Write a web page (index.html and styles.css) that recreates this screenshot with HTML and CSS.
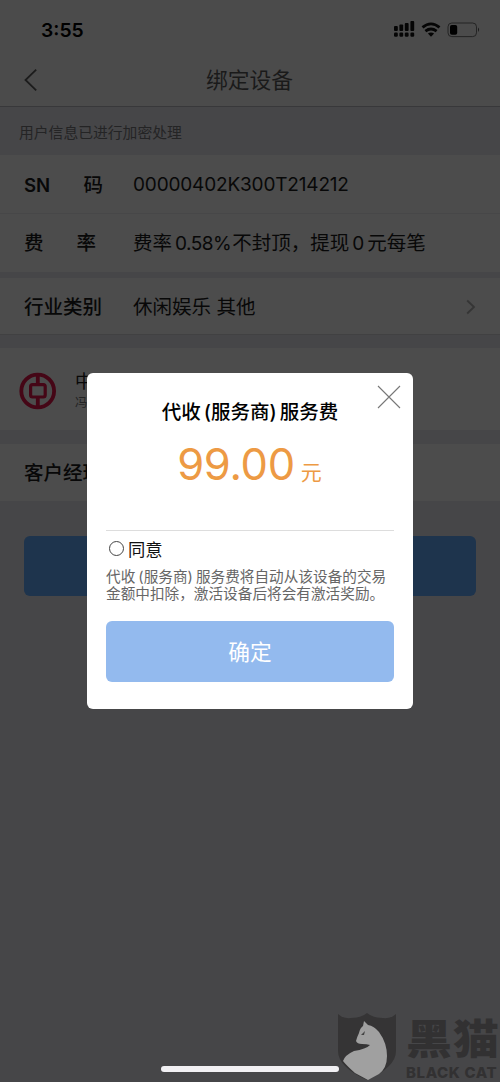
FILE: index.html
```html
<!DOCTYPE html>
<html lang="zh-CN">
<head>
<meta charset="utf-8">
<title>绑定设备</title>
<link rel="stylesheet" href="styles.css">
</head>
<body>
<div class="screen">
  <header class="top">
    <div class="status">
      <span class="time">3:55</span>
      <svg class="status-icons" width="88" height="20" viewBox="0 0 88 20">
        <g fill="#050505">
          <rect x="1" y="6" width="3.8" height="5" rx="1"/><rect x="6.4" y="4.6" width="3.8" height="6.4" rx="1"/><rect x="11.8" y="3" width="3.8" height="8" rx="1"/><rect x="17.4" y="1" width="3.8" height="10" rx="1"/>
          <rect x="1" y="12.6" width="3.8" height="4.2" rx="1.2"/><rect x="6.4" y="12.6" width="3.8" height="4.2" rx="1.2"/><rect x="11.8" y="12.6" width="3.8" height="4.2" rx="1.2"/><rect x="17.4" y="12.6" width="3.8" height="4.2" rx="1.2"/>
          <path d="M38 16.7L34.9 13.6Q38 11.2 41.1 13.6Z"/>
        </g>
        <g fill="none" stroke="#050505" stroke-width="2.8">
          <path d="M29.5 7.4Q38 .4 46.5 7.4"/><path d="M32.4 11.1Q38 6.8 43.6 11.1"/>
        </g>
        <rect x="55" y="3" width="28.5" height="13.6" rx="3.8" fill="none" stroke="#242424" stroke-width="1"/>
        <rect x="57" y="5" width="7.2" height="9.8" rx="1.8" fill="#000"/>
        <path d="M85 7.6Q87.2 9.8 85 12Z" fill="#1c1c1c"/>
      </svg>
    </div>
    <div class="nav">
      <svg class="back" width="14" height="24" viewBox="0 0 14 24"><path d="M13.2 1.7L2.5 12L13.2 22.3" fill="none" stroke="#1c1c1c" stroke-width="1.8"/></svg>
      <h1 class="nav-title">绑定设备</h1>
    </div>
  </header>
  <p class="notice">用户信息已进行加密处理</p>
  <section class="group">
    <div class="row row-sn"><span class="label"><span class="latin">SN</span><span>码</span></span><span class="value serial">00000402K300T214212</span></div>
    <div class="row row-rate"><span class="label label-rate"><span>费</span><span>率</span></span><span class="value rate">费率<span class="num">0.58%</span>不封顶，提现<span class="zero">0</span>元每笔</span></div>
  </section>
  <section class="group industry">
    <div class="row"><span class="label">行业类别</span><span class="value">休闲娱乐 其他</span>
      <svg class="arrow" width="10" height="16" viewBox="0 0 10 16"><path d="M1.2 1.5L8 8L1.2 14.5" fill="none" stroke="#353535" stroke-width="1.8"/></svg>
    </div>
  </section>
  <section class="bank">
    <svg width="38" height="38" viewBox="0 0 38 38"><g fill="none" stroke="#450616"><circle cx="18.7" cy="19" r="16.4" stroke-width="3.8"/><rect x="11.6" y="12.6" width="14.6" height="12.4" rx="2" stroke-width="3.2"/><path d="M18.8 2V12.6M18.8 25V36" stroke-width="3.8"/></g></svg>
    <div class="bank-text"><span class="bank-name">中</span><span class="holder">冯</span></div>
  </section>
  <section class="manager">客户经理</section>
  <div class="submit"></div>
</div>

<div class="modal">
  <svg class="close" width="24" height="24" viewBox="0 0 24 24"><path d="M1 1L23 23M23 1L1 23" stroke="#777" stroke-width="1.1"/></svg>
  <h2 class="modal-title">代收<span class="paren-open">(</span>服务商<span class="paren-close">)</span>服务费</h2>
  <div class="price"><span class="amount">99.00</span><span class="unit">元</span></div>
  <div class="agree"><span class="radio"></span>同意</div>
  <p class="terms">代收<span class="paren-open">(</span>服务商<span class="paren-close">)</span>服务费将自动从该设备的交易<br>金额中扣除，激活设备后将会有激活奖励。</p>
  <div class="confirm">确定</div>
</div>

<div class="home-bar"></div>
<div class="watermark">
  <svg width="60" height="68" viewBox="0 0 60 68">
    <path d="M1 1Q6 6 14 5Q24 5 30 0Q36 5 46 5Q54 6 59 1V38Q59 54 30 67Q1 54 1 38Z" fill="#353435"/>
    <path d="M27 8L31 12Q37 13 42 19Q50 30 50 43Q50 55 42 61L31 67L18 60Q10 53 6 48Q8 42 17 38Q29 36 33 32Q30 31 25 31Q20 31 19 28Q20 24 22 20Q23 15 26 13Z" fill="#a0a0a0"/>
    <path d="M24 22L28 18L27 22Z" fill="#444"/>
  </svg>
  <div class="brand"><span class="brand-cn">黑猫</span><span class="brand-en">BLACK CAT</span></div>
</div>
</body>
</html>
```
FILE: styles.css
```css
* { box-sizing: border-box; }
body {
  margin: 0;
  width: 500px;
  height: 1082px;
  position: relative;
  overflow: hidden;
  background: #464648;
  color: #080808;
  font-family: Inter, "Noto Sans CJK SC", sans-serif;
}
h1, h2, p { margin: 0; font-weight: 400; }
svg { display: block; flex: none; }

.top { height: 107px; background: #4b4b4b; border-bottom: 1px solid #38383a; }
.status { height: 54px; padding: 20px 15px 0 41px; display: flex; justify-content: space-between; }
.time { font-size: 19.3px; line-height: 21px; font-weight: 600; color: #000; }
.status-icons { margin-right: 4px; }
.nav { height: 52px; display: flex; align-items: center; padding-left: 23px; }
.nav-title { flex: 1; margin-right: 38px; text-align: center; font-size: 21.8px; line-height: 32px; color: #1a1a1a; }
.notice { height: 48px; padding-left: 19px; font-size: 14.8px; line-height: 52px; color: #242425; }

.row { display: flex; align-items: center; padding: 2px 24px 0; background: #4c4c4c; font-size: 19.5px; line-height: 28px; }
.row-sn { height: 59px; border-bottom: 1px solid #474748; }
.row-rate { height: 58px; padding-top: 0; }
.label { width: 79px; margin-right: 30px; display: flex; justify-content: space-between; align-items: baseline; font-weight: 500; white-space: nowrap; }
.latin { font-size: 18.6px; font-weight: 600; }
.label-rate { padding-right: 7px; }
.value { white-space: nowrap; }
.serial { font-size: 19px; letter-spacing: -.17px; }
.rate { font-size: 19.5px; }
.num { margin: 0 1px 0 3px; font-size: 19px; letter-spacing: -.5px; }
.zero { margin: 0 3px; font-size: 19px; }
.industry { margin-top: 6px; }
.industry .row { height: 57px; border-bottom: 1px solid #414142; }
.arrow { margin-left: auto; }

.bank { height: 82px; margin-top: 13px; padding: 4px 0 0 19px; display: flex; align-items: center; gap: 18px; background: #4c4c4c; }
.bank-text { display: flex; flex-direction: column; padding-top: 1px; }
.bank-name { font-size: 18px; line-height: 22px; }
.holder { font-size: 12.5px; line-height: 19px; color: #242424; }
.manager { height: 57px; margin-top: 14px; padding-left: 24px; background: #4c4c4c; font-size: 19.5px; line-height: 59px; font-weight: 500; }
.submit { height: 60px; margin: 35px 24px 0; border-radius: 6px; background: #1e344d; }

.modal {
  position: absolute;
  left: 87px;
  top: 373px;
  width: 326px;
  height: 336px;
  padding: 24px 19px 27px;
  border-radius: 6px;
  background: #fff;
}
.close { position: absolute; right: 12px; top: 12px; }
.modal-title { text-align: center; font-size: 19.5px; line-height: 31px; font-weight: 500; color: #000; white-space: nowrap; }
.paren-open { margin-left: 3px; }
.paren-close { margin-right: 3px; }
.price { height: 103px; display: flex; justify-content: center; align-items: baseline; gap: 6px; border-bottom: 1px solid #ddd; color: #ed9a44; }
.amount { font-size: 43.5px; line-height: 72px; letter-spacing: -.3px; }
.unit { font-size: 21px; line-height: 30px; margin-right: 1px; }
.agree { height: 37px; padding: 0 0 2px 3px; display: flex; align-items: center; gap: 4px; font-size: 17.3px; color: #111; }
.radio { width: 15px; height: 15px; border: 1.5px solid #444; border-radius: 50%; }
.terms { padding-top: 1px; font-size: 14.65px; line-height: 17px; color: #666; white-space: nowrap; }
.confirm { height: 61px; margin-top: 18px; border-radius: 6px; background: #93baee; color: #fff; text-align: center; font-size: 21.7px; line-height: 62px; }

.home-bar { position: absolute; left: 161px; top: 1066px; width: 178px; height: 6px; border-radius: 3px; background: #f1f0f3; }
.watermark { position: absolute; left: 337px; top: 1013px; display: flex; gap: 9px; color: #323132; }
.brand { display: flex; flex-direction: column; white-space: nowrap; }
.brand-cn { height: 51px; font-size: 46px; line-height: 53px; font-weight: 900; letter-spacing: 1px; transform: scaleY(.9); }
.brand-en { font-size: 15px; line-height: 17px; font-weight: 800; letter-spacing: .6px; }
```
